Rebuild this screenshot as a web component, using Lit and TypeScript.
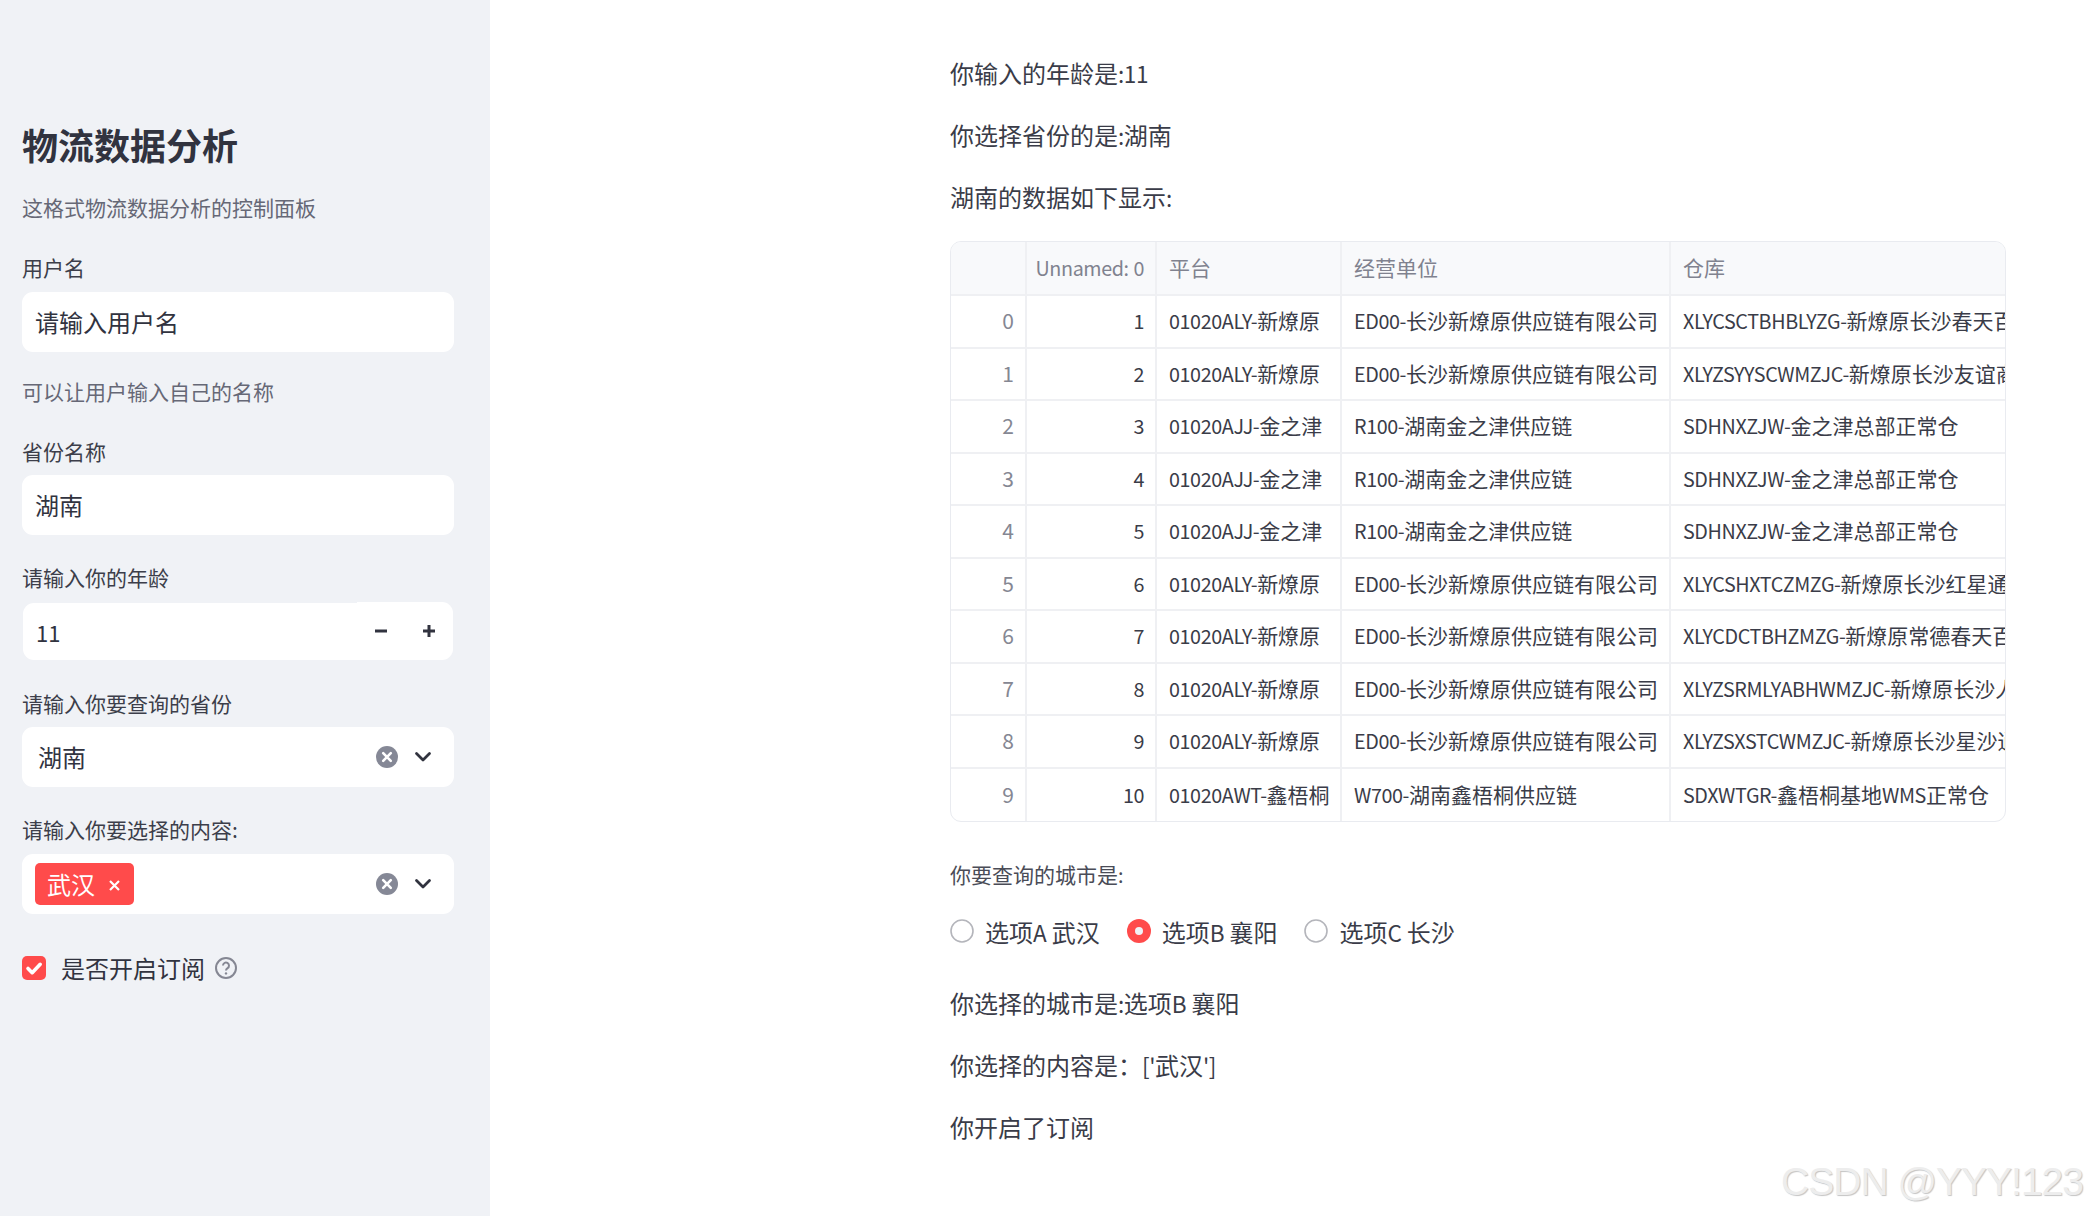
import { LitElement, html, css, svg } from "lit";
import { customElement } from "lit/decorators.js";

const rows: string[][] = [
  ["0", "1", "01020ALY-新燎原", "ED00-长沙新燎原供应链有限公司", "XLYCSCTBHBLYZG-新燎原长沙春天百货正常仓"],
  ["1", "2", "01020ALY-新燎原", "ED00-长沙新燎原供应链有限公司", "XLYZSYYSCWMZJC-新燎原长沙友谊商城正常仓"],
  ["2", "3", "01020AJJ-金之津", "R100-湖南金之津供应链", "SDHNXZJW-金之津总部正常仓"],
  ["3", "4", "01020AJJ-金之津", "R100-湖南金之津供应链", "SDHNXZJW-金之津总部正常仓"],
  ["4", "5", "01020AJJ-金之津", "R100-湖南金之津供应链", "SDHNXZJW-金之津总部正常仓"],
  ["5", "6", "01020ALY-新燎原", "ED00-长沙新燎原供应链有限公司", "XLYCSHXTCZMZG-新燎原长沙红星通程正常仓"],
  ["6", "7", "01020ALY-新燎原", "ED00-长沙新燎原供应链有限公司", "XLYCDCTBHZMZG-新燎原常德春天百货正常仓"],
  ["7", "8", "01020ALY-新燎原", "ED00-长沙新燎原供应链有限公司", "XLYZSRMLYABHWMZJC-新燎原长沙人民路正常仓"],
  ["8", "9", "01020ALY-新燎原", "ED00-长沙新燎原供应链有限公司", "XLYZSXSTCWMZJC-新燎原长沙星沙通程正常仓"],
  ["9", "10", "01020AWT-鑫梧桐", "W700-湖南鑫梧桐供应链", "SDXWTGR-鑫梧桐基地WMS正常仓"],
];

/* Latin runs are set a little narrower than the CJK around them. */
const t = (s: string) =>
  s.split(/([\x21-\x7e]+)/).map((part, i) => (i % 2 ? html`<span class="lat">${part}</span>` : part));

const clearIcon = svg`<svg class="clear" viewBox="0 0 22 22"><circle cx="11" cy="11" r="11" fill="#858896"/><path d="M7.2 7.2l7.6 7.6M14.8 7.2l-7.6 7.6" stroke="#fff" stroke-width="2.6" stroke-linecap="round"/></svg>`;
const chevron = svg`<svg class="chev" viewBox="0 0 18 12"><path d="M2.5 2.5L9 9l6.5-6.5" fill="none" stroke="#31333f" stroke-width="2.8" stroke-linecap="round" stroke-linejoin="round"/></svg>`;

@customElement("app-root")
export class AppRoot extends LitElement {
  static styles = css`
    :host {
      display: flex;
      width: 2089px;
      height: 1216px;
      overflow: hidden;
      position: relative;
      background: #fff;
      color: #31333f;
      font-family: "Noto Sans CJK SC", "Noto Sans", sans-serif;
    }
    .lat { font-size: 0.94em; letter-spacing: -0.02em; }
    .side {
      width: 490px;
      flex: none;
      box-sizing: border-box;
      background: #f0f2f6;
      padding: 120px 36px 0 22px;
      display: flex;
      flex-direction: column;
    }
    h1 {
      margin: 0;
      font-size: 36px;
      line-height: 48px;
      font-weight: 700;
      color: #31333f;
    }
    .cap {
      font-size: 21px;
      line-height: 30px;
      color: #666876;
    }
    .c1 { margin-top: 24px; }
    .c2 { margin-top: 24px; }
    .label {
      font-size: 21px;
      line-height: 30px;
      color: #3c3e4a;
      margin-bottom: 9px;
    }
    .l1 { margin-top: 30px; margin-bottom: 10px; }
    .l2 { margin-top: 30px; }
    .l3 { margin-top: 27px; }
    .l4 { margin-top: 28px; margin-bottom: 9px; }
    .l5 { margin-top: 27px; margin-bottom: 10px; }
    .field {
      height: 60px;
      background: #fff;
      border-radius: 11px;
      display: flex;
      align-items: center;
      font-size: 24px;
      padding-left: 13px;
    }
    .ft { margin-top: -2px; }
    .sel { padding-left: 16px; }
    .grow { flex: 1; }
    .clear { width: 22px; height: 22px; flex: none; }
    .chev { width: 18px; height: 12px; flex: none; margin: -1px 22px 0 16px; }
    .tag {
      width: 99px;
      height: 42px;
      box-sizing: border-box;
      background: #ff4b4b;
      border-radius: 5px;
      color: #fff;
      display: flex;
      align-items: center;
      padding-left: 12px;
      gap: 13px;
    }
    .tag span { margin-top: -2px; }
    .tag svg { width: 13px; height: 13px; margin-top: 2px; }
    .num {
      height: 58px;
      margin: 1px 1px 0;
      display: flex;
      font-size: 22px;
    }
    .num .in {
      flex: 1;
      background: #fff;
      margin-top: 1px;
      border-radius: 11px 0 0 11px;
      padding-left: 13px;
      display: flex;
      align-items: center;
    }
    .num .btns {
      width: 96px;
      background: #fff;
      border-radius: 0 11px 11px 0;
      display: flex;
      align-items: center;
    }
    .num .btns svg { width: 14px; height: 14px; margin-left: 17px; }
    .num .btns svg + svg { margin-left: 34px; }
    .check {
      margin-top: 36px;
      display: flex;
      align-items: center;
      height: 36px;
      font-size: 24px;
    }
    .check span { margin-top: -2px; }
    .box { width: 24px; height: 24px; margin-right: 15px; flex: none; }
    .help { width: 22px; height: 22px; margin-left: 10px; flex: none; }

    .main {
      flex: 1;
      box-sizing: border-box;
      padding: 56px 83px 0 460px;
      min-width: 0;
    }
    p { margin: 0; font-size: 24px; line-height: 34px; color: #3a3c48; }
    .p2, .p3 { margin-top: 28px; }
    .tbl {
      margin-top: 27px;
      width: 1056px;
      height: 581px;
      box-sizing: border-box;
      border: 1px solid #e9ebf0;
      border-radius: 11px;
      overflow: hidden;
      display: grid;
      grid-template-columns: 76px 130px 185px 329px 1fr;
      grid-template-rows: 54px repeat(10, 52.5px);
      font-size: 21px;
      color: #3a3c48;
    }
    .cell {
      box-sizing: border-box;
      border-right: 2px solid #eff0f3;
      border-bottom: 2px solid #eff0f3;
      padding: 0 11px 2px 12px;
      display: flex;
      align-items: center;
      white-space: nowrap;
      overflow: hidden;
      min-width: 0;
    }
    .cell.last { border-right: 0; }
    .cell.bot { border-bottom: 0; }
    .cell.r { justify-content: flex-end; }
    .head { background: #f8f9fb; color: #80828f; }
    .idx { color: #858793; }

    .rlabel { margin-top: 37px; font-size: 21px; line-height: 30px; color: #4a4c57; }
    .radios {
      margin-top: 23px;
      height: 36px;
      display: flex;
      align-items: center;
      font-size: 24px;
      color: #3a3c48;
    }
    .radio { display: flex; align-items: center; margin-right: 27px; }
    .radio svg { width: 24px; height: 24px; margin-right: 11px; flex: none; }
    .p4 { margin-top: 37px; }
    .p5, .p6 { margin-top: 28px; }

    .mark {
      position: absolute;
      right: 6px;
      top: 1157px;
      font-family: "Liberation Sans", Arial, sans-serif;
      font-size: 39px;
      letter-spacing: -1px;
      line-height: 50px;
      white-space: nowrap;
      color: #ededed;
      text-shadow: 1px 1px 1px #c4c4c4;
    }
  `;

  render() {
    const radio = (label: string, on: boolean) => html`<div class="radio">
      ${on
        ? svg`<svg viewBox="0 0 24 24"><circle cx="12" cy="12" r="12" fill="#ff4b4b"/><circle cx="12" cy="12" r="4" fill="#f0f2f6"/></svg>`
        : svg`<svg viewBox="0 0 24 24"><circle cx="12" cy="12" r="11" fill="#fff" stroke="#b4b5bb" stroke-width="1.6"/></svg>`}
      <span>${t(label)}</span>
    </div>`;
    return html`
      <aside class="side">
        <h1>物流数据分析</h1>
        <div class="cap c1">这格式物流数据分析的控制面板</div>
        <div class="label l1">用户名</div>
        <div class="field"><span class="ft">请输入用户名</span></div>
        <div class="cap c2">可以让用户输入自己的名称</div>
        <div class="label l2">省份名称</div>
        <div class="field"><span class="ft">湖南</span></div>
        <div class="label l3">请输入你的年龄</div>
        <div class="num">
          <div class="in">11</div>
          <div class="btns">
            <svg viewBox="0 0 14 14"><path d="M1 7h12" stroke="#31333f" stroke-width="3"/></svg>
            <svg viewBox="0 0 14 14"><path d="M1 7h12M7 1v12" stroke="#31333f" stroke-width="3"/></svg>
          </div>
        </div>
        <div class="label l4">请输入你要查询的省份</div>
        <div class="field sel"><span class="grow ft">湖南</span>${clearIcon}${chevron}</div>
        <div class="label l5">请输入你要选择的内容:</div>
        <div class="field">
          <div class="tag">
            <span>武汉</span>
            <svg viewBox="0 0 13 13"><path d="M2 2l9 9M11 2l-9 9" stroke="#fff" stroke-width="2.2"/></svg>
          </div>
          <span class="grow"></span>${clearIcon}${chevron}
        </div>
        <div class="check">
          <svg class="box" viewBox="0 0 24 24"><rect width="24" height="24" rx="5" fill="#ff4b4b"/><path d="M6 12.5l4.2 4.2 8-8.4" fill="none" stroke="#fff" stroke-width="3.6" stroke-linecap="round" stroke-linejoin="round"/></svg>
          <span>是否开启订阅</span>
          <svg class="help" viewBox="0 0 22 22"><circle cx="11" cy="11" r="10" fill="none" stroke="#858793" stroke-width="2"/><path d="M8 8.6a3 3 0 1 1 4.6 2.5c-1 .7-1.6 1.2-1.6 2.4" fill="none" stroke="#858793" stroke-width="2"/><circle cx="11" cy="16.4" r="1.2" fill="#858793"/></svg>
        </div>
      </aside>
      <main class="main">
        <p>${t("你输入的年龄是:11")}</p>
        <p class="p2">${t("你选择省份的是:湖南")}</p>
        <p class="p3">${t("湖南的数据如下显示:")}</p>
        <div class="tbl">
          <div class="cell head"></div>
          <div class="cell head r"><span>${t("Unnamed: 0")}</span></div>
          <div class="cell head">平台</div>
          <div class="cell head">经营单位</div>
          <div class="cell head last">仓库</div>
          ${rows.map((r, i) => {
            const b = i === 9 ? "bot" : "";
            return html`
              <div class="cell idx r ${b}">${r[0]}</div>
              <div class="cell r ${b}"><span>${t(r[1])}</span></div>
              <div class="cell ${b}"><span>${t(r[2])}</span></div>
              <div class="cell ${b}"><span>${t(r[3])}</span></div>
              <div class="cell last ${b}"><span>${t(r[4])}</span></div>
            `;
          })}
        </div>
        <div class="rlabel">${t("你要查询的城市是:")}</div>
        <div class="radios">
          ${radio("选项A 武汉", false)}${radio("选项B 襄阳", true)}${radio("选项C 长沙", false)}
        </div>
        <p class="p4">${t("你选择的城市是:选项B 襄阳")}</p>
        <p class="p5">${t("你选择的内容是：['武汉']")}</p>
        <p class="p6">你开启了订阅</p>
      </main>
      <div class="mark">CSDN @YYY!123</div>
    `;
  }
}
